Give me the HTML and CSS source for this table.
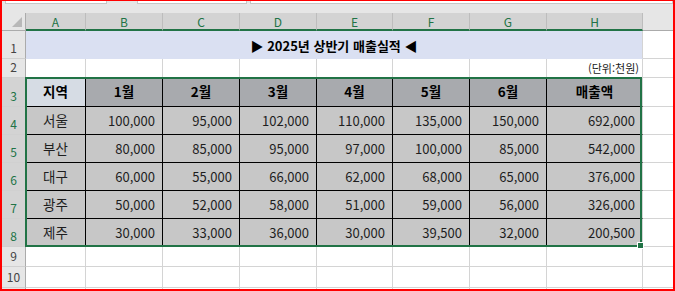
FILE: index.html
```html
<!DOCTYPE html>
<html lang="ko">
<head>
<meta charset="utf-8">
<title>2025년 상반기 매출실적</title>
<link rel="stylesheet" href="styles.css">
</head>
<body>
<div class="frame">
  <div class="toolbar">
    <span class="box b1"></span><span class="box b2"></span><span class="box b3"></span>
  </div>
  <div class="sheet">
    <div class="corner"><span class="tri"></span></div>
    <div class="ch sel">A</div><div class="ch sel">B</div><div class="ch sel">C</div><div class="ch sel">D</div>
    <div class="ch sel">E</div><div class="ch sel">F</div><div class="ch sel">G</div><div class="ch sel">H</div>
    <div class="ch">I</div>

    <div class="rh">1</div>
    <div class="title">▶ 2025년 상반기 매출실적 ◀</div>
    <div class="c"></div>

    <div class="rh">2</div>
    <div class="c"></div><div class="c"></div><div class="c"></div><div class="c"></div>
    <div class="c"></div><div class="c"></div><div class="c"></div>
    <div class="c unit">(단위:천원)</div>
    <div class="c"></div>

    <div class="rh sel">3</div>
    <div class="c t hd hd-a">지역</div>
    <div class="c t hd">1월</div><div class="c t hd">2월</div><div class="c t hd">3월</div>
    <div class="c t hd">4월</div><div class="c t hd">5월</div><div class="c t hd">6월</div>
    <div class="c t hd tl">매출액</div>
    <div class="c"></div>

    <div class="rh sel">4</div>
    <div class="c t nm">서울</div>
    <div class="c t num">100,000</div><div class="c t num">95,000</div><div class="c t num">102,000</div>
    <div class="c t num">110,000</div><div class="c t num">135,000</div><div class="c t num">150,000</div>
    <div class="c t num tl">692,000</div>
    <div class="c"></div>

    <div class="rh sel">5</div>
    <div class="c t nm">부산</div>
    <div class="c t num">80,000</div><div class="c t num">85,000</div><div class="c t num">95,000</div>
    <div class="c t num">97,000</div><div class="c t num">100,000</div><div class="c t num">85,000</div>
    <div class="c t num tl">542,000</div>
    <div class="c"></div>

    <div class="rh sel">6</div>
    <div class="c t nm">대구</div>
    <div class="c t num">60,000</div><div class="c t num">55,000</div><div class="c t num">66,000</div>
    <div class="c t num">62,000</div><div class="c t num">68,000</div><div class="c t num">65,000</div>
    <div class="c t num tl">376,000</div>
    <div class="c"></div>

    <div class="rh sel">7</div>
    <div class="c t nm">광주</div>
    <div class="c t num">50,000</div><div class="c t num">52,000</div><div class="c t num">58,000</div>
    <div class="c t num">51,000</div><div class="c t num">59,000</div><div class="c t num">56,000</div>
    <div class="c t num tl">326,000</div>
    <div class="c"></div>

    <div class="rh sel">8</div>
    <div class="c t nm">제주</div>
    <div class="c t num">30,000</div><div class="c t num">33,000</div><div class="c t num">36,000</div>
    <div class="c t num">30,000</div><div class="c t num">39,500</div><div class="c t num">32,000</div>
    <div class="c t num tl">200,500</div>
    <div class="c"></div>

    <div class="rh">9</div>
    <div class="c"></div><div class="c"></div><div class="c"></div><div class="c"></div><div class="c"></div>
    <div class="c"></div><div class="c"></div><div class="c"></div><div class="c"></div>

    <div class="rh">10</div>
    <div class="c"></div><div class="c"></div><div class="c"></div><div class="c"></div><div class="c"></div>
    <div class="c"></div><div class="c"></div><div class="c"></div><div class="c"></div>

    <div class="rh"></div>
    <div class="c"></div><div class="c"></div><div class="c"></div><div class="c"></div><div class="c"></div>
    <div class="c"></div><div class="c"></div><div class="c"></div><div class="c"></div>

    <div class="selection"><span class="handle"></span></div>
  </div>
</div>
</body>
</html>
```
FILE: styles.css
```css
html, body {
  margin: 0;
  padding: 0;
  background: #ffffff;
}

.frame {
  width: 675px;
  height: 291px;
  box-sizing: border-box;
  border-style: solid;
  border-color: #ff0000;
  border-width: 1px 2px 2px 2px;
  overflow: hidden;
  background: #e6e6e6;
  font-family: "Noto Sans CJK KR", "Noto Sans", sans-serif;
  color: #1e1e1e;
}

.toolbar {
  height: 12px;
  display: flex;
  align-items: flex-start;
}

.box {
  display: block;
  height: 2px;
  background: #ffffff;
  border: 1px solid #c6c6c6;
  border-top: none;
}

.b1 { margin-left: 3px; width: 100px; }
.b2 { margin-left: 30px; width: 108px; }
.b3 { margin-left: 3px; flex: 1; }

.sheet {
  position: relative;
  display: grid;
  grid-template-columns: 24px 60px 77px 77px 77px 76px 77px 77px 96px 64px;
  grid-template-rows: 18px 28px 19px 29px 28px 28px 28px 28px 28px 20px 21px 20px;
  width: max-content;
}

.sheet > div {
  box-sizing: border-box;
}

.corner {
  background: #e6e6e6;
  border-right: 1px solid #ababab;
  border-bottom: 1px solid #ababab;
  display: flex;
  align-items: flex-end;
  justify-content: flex-end;
  padding: 0 3px 3px 0;
}

.tri {
  display: block;
  width: 0;
  height: 0;
  border-left: 10px solid transparent;
  border-bottom: 10px solid #b8b8b8;
}

.ch {
  background: #e6e6e6;
  border-right: 1px solid #bdbdbd;
  border-bottom: 1px solid #ababab;
  display: flex;
  align-items: center;
  justify-content: center;
  font-size: 12px;
  line-height: 1;
  color: #444444;
  padding-top: 1px;
}

.ch.sel {
  background: #d3d3d3;
  color: #217346;
  border-bottom: 2px solid #217346;
  padding-top: 2px;
}

.rh {
  background: #e6e6e6;
  border-right: 1px solid #ababab;
  border-bottom: 1px solid #d0d0d0;
  display: flex;
  align-items: flex-end;
  justify-content: center;
  font-size: 12px;
  line-height: 1;
  color: #444444;
  padding-bottom: 4px;
}

.rh.sel {
  background: #d3d3d3;
  color: #217346;
}

.c {
  background: #ffffff;
  border-right: 1px solid #d4d4d4;
  border-bottom: 1px solid #d4d4d4;
  display: flex;
  align-items: center;
  font-size: 13px;
  line-height: 1;
}

.title {
  grid-column: 2 / 10;
  background: #dae0f2;
  border-right: 1px solid #d4d4d4;
  border-bottom: 1px solid #dae0f2;
  display: flex;
  align-items: center;
  justify-content: center;
  font-size: 13px;
  font-weight: bold;
  line-height: 1;
  color: #000000;
  padding-top: 1px;
}

.unit {
  justify-content: flex-end;
  align-items: flex-end;
  padding: 0 3px 3px 0;
  font-size: 11px;
  color: #222222;
}

.t {
  border-right-color: #000000;
  border-bottom-color: #000000;
  background: #c7c7c7;
}

.t.tl {
  border-right-color: #d4d4d4;
}

.hd {
  background: #a8aaae;
  justify-content: center;
  font-weight: bold;
  color: #000000;
  font-size: 13.5px;
}

.hd-a {
  background: #d6dce4;
}

.nm {
  justify-content: center;
  font-size: 13.5px;
}

.num {
  justify-content: flex-end;
  padding-right: 7px;
}

.selection {
  position: absolute;
  left: 23px;
  top: 64px;
  width: 617px;
  height: 170px;
  box-sizing: border-box;
  border: 2px solid #217346;
  pointer-events: none;
}

.handle {
  position: absolute;
  right: -4px;
  bottom: -4px;
  width: 5px;
  height: 5px;
  background: #217346;
  border: 1px solid #ffffff;
}
```
